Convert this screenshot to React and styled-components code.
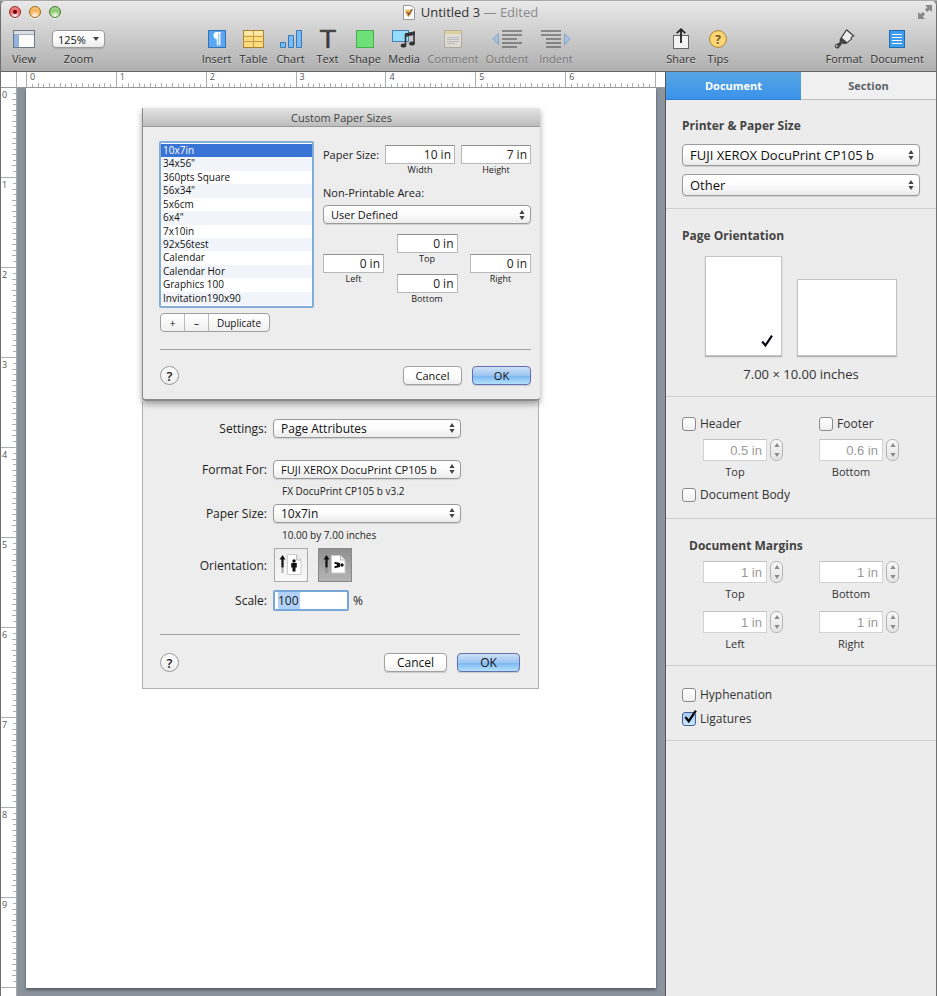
import React, { useState } from 'react';
import styled, { createGlobalStyle, css } from 'styled-components';

const GlobalStyle = createGlobalStyle`
  :root {
    --edge: #6f6f6f;
    --panel: #ececec;
    --ink: #333;
    --rule: #cfcfcf;
    --desk: #8b939d;
    --ui: 'Open Sans', 'Noto Sans', sans-serif;
  }

  * {
    box-sizing: border-box;
  }

  body {
    margin: 0;
    background: #8a8a8a;
    font-family: var(--ui);
    font-size: 12px;
    color: var(--ink);
  }

  button, input, select {
    font-family: inherit;
    margin: 0;
  }
`;

// --- Window ---
const Behind = styled.div`
  height: 1px;
  background: #a9a9a9;
`;

const Window = styled.div`
  display: flex;
  flex-direction: column;
  min-height: calc(100vh - 1px);
  border: solid var(--edge);
  border-width: 0 1px;
  border-radius: 5px 5px 0 0;
  overflow: hidden;
  background: var(--panel);
`;

const Chrome = styled.header`
  background: linear-gradient(#e9e9e9, #cfcfcf 45%, #b0b0b0);
  border-bottom: 1px solid #666;
`;

const TitleBar = styled.div`
  display: grid;
  grid-template-columns: 1fr auto 1fr;
  align-items: center;
  height: 22px;
  padding: 0 4px 0 8px;
`;

const Lights = styled.div`
  display: flex;
  gap: 8px;
`;

const Light = styled.button`
  width: 12px;
  height: 12px;
  padding: 0;
  border: 1px solid ${({ $edge }) => $edge};
  border-radius: 50%;
  background: radial-gradient(circle at 50% 90%, #fff 0, ${({ $color }) => $color} 60%);
  box-shadow: 0 1px 0 #f5f5f5, inset 0 2px 2px rgba(255, 255, 255, 0.4);
  display: grid;
  place-items: center;

  i {
    width: 4px;
    height: 4px;
    border-radius: 50%;
    background: #6d0508;
  }
`;

const Title = styled.h1`
  display: flex;
  align-items: center;
  gap: 6px;
  margin: 0;
  font-size: 13px;
  font-weight: 400;
  color: #333;

  em {
    font-style: normal;
    color: #8a8a8a;
  }
`;

const PlainButton = styled.button`
  justify-self: end;
  padding: 0;
  border: 0;
  background: none;
  line-height: 0;
`;

const Toolbar = styled.div`
  display: flex;
  height: 48px;
  padding: 4px 6px 0 5px;
`;

const Gap = styled.div`
  flex: ${({ $grow }) => $grow} 1 0;
`;

const itemBox = css`
  width: ${({ $w }) => $w}px;
  display: grid;
  grid-template-rows: 24px 16px;
  justify-items: center;
  align-items: center;
  align-content: start;
  padding: 0;
  border: 0;
  background: none;
  font-size: 11px;
  line-height: 16px;
  color: #333;
  text-shadow: 0 1px 0 rgba(255, 255, 255, 0.4);
`;

const ToolItem = styled.button`
  ${itemBox}
  opacity: ${({ disabled }) => (disabled ? 0.5 : 1)};

  svg {
    overflow: visible;
  }
`;

const ZoomItem = styled.label`
  ${itemBox}
  margin-left: 10px;
`;

// --- Selects: the arrow is stacked in the same grid cell ---
const SelectBox = styled.span`
  display: grid;
  align-items: center;
  width: 100%;

  > * {
    grid-area: 1 / 1;
  }

  svg {
    justify-self: end;
    margin-right: 6px;
    pointer-events: none;
  }
`;

const Select = styled.select`
  appearance: none;
  width: 100%;
  height: ${({ $h }) => $h}px;
  padding: 0 ${({ $pad }) => $pad || 7}px;
  border: 1px solid #9a9a9a;
  border-radius: 4px;
  background: linear-gradient(#fff, #fdfdfd 45%, #ebebeb);
  box-shadow: 0 1px 1px rgba(0, 0, 0, 0.12);
  font-size: ${({ $size }) => $size}px;
  color: #111;
`;

// --- Body of the window ---
const Body = styled.div`
  flex: 1;
  display: grid;
  grid-template-columns: 1fr 271px;
`;

const Main = styled.main`
  display: grid;
  grid-template-columns: 16px 1fr;
  grid-template-rows: 16px 1fr;
`;

const Corner = styled.div`
  background: #fff;
  border-right: 1px solid #aaa;
  border-bottom: 1px solid #999;
`;

const rulerText = css`
  background: #fff;
  font-size: 9px;
  line-height: 10px;
  color: #555;
`;

const RulerX = styled.div`
  ${rulerText}
  display: flex;
  padding: 0 9px;
  border-bottom: 1px solid #999;
`;

const InchX = styled.div`
  flex: 1;
  display: grid;
  border-left: 1px solid #aaafb6;

  &:last-child {
    border-right: 1px solid #aaafb6;
  }

  > * {
    grid-area: 1 / 1;
  }

  span {
    padding-left: 3px;
  }
`;

const RulerY = styled.div`
  ${rulerText}
  display: flex;
  flex-direction: column;
  padding-bottom: 8px;
  border-right: 1px solid #aaa;
`;

const InchY = styled.div`
  flex: 1 1 0;
  min-height: 0;
  display: grid;
  grid-template-rows: minmax(0, 1fr);
  border-bottom: 1px solid #aaafb6;

  > * {
    grid-area: 1 / 1;
  }

  span {
    padding: 2px 0 0 1px;
  }
`;

const Ticks = styled.svg`
  contain: size;
  width: 100%;
  height: 100%;
  stroke: #aaafb6;
  shape-rendering: crispEdges;
`;

const Canvas = styled.div`
  background: var(--desk);
  padding: 0 9px 8px;
`;

const Paper = styled.article`
  aspect-ratio: 7 / 10;
  padding: 20px 116px;
  background: #fff;
  box-shadow: 0 2px 3px rgba(0, 0, 0, 0.4);
`;

// --- Dialogs placed on the paper ---
const Sheet = styled.section`
  position: relative;
  z-index: 1;
  background: #ededed;
  border: solid #8a8a8a;
  border-width: 0 0 2px 1px;
  border-radius: 0 0 4px 4px;
  box-shadow: 0 3px 6px rgba(0, 0, 0, 0.35);
`;

const SheetTitle = styled.h2`
  margin: 0;
  height: 19px;
  border-bottom: 1px solid #999;
  background: linear-gradient(#e4e4e4, #bdbdbd);
  font-size: 11px;
  font-weight: 400;
  line-height: 19px;
  text-align: center;
  color: #444;
`;

const SheetBody = styled.div`
  display: flex;
  justify-content: space-between;
  gap: 8px;
  padding: 14px 9px 0 16px;
`;

const ListColumn = styled.div`
  width: 155px;
`;

const SizeList = styled.ul`
  display: grid;
  grid-auto-rows: minmax(0, 1fr);
  height: 167px;
  margin: 0 0 5px;
  padding: 1px 0;
  list-style: none;
  border: 2px solid #82add6;
  border-radius: 2px;
  background: #fff;
  font-size: 10px;
  line-height: 13px;
  color: #111;
`;

const SizeRow = styled.li`
  padding-left: 2px;
  background: ${({ $on }) => ($on ? '#3873d5' : 'transparent')};
  color: ${({ $on }) => ($on ? '#fff' : 'inherit')};

  &:nth-child(even) {
    background-color: #f1f5fa;
  }
`;

const Segments = styled.div`
  display: flex;
  width: 110px;
  height: 19px;
  margin-left: 1px;
  border: 1px solid #a0a0a0;
  border-radius: 4px;
  background: linear-gradient(#fff, #f0f0f0);

  button {
    padding: 0;
    width: 24px;
    border: 0;
    border-right: 1px solid #bbb;
    background: none;
    font-size: 10px;
    line-height: 16px;
    color: #111;
  }

  button:last-child {
    flex: 1;
    border-right: 0;
  }
`;

const Settings = styled.div`
  width: 208px;
  padding-top: 4px;
  font-size: 11px;
  line-height: 16px;
  color: #222;
`;

const SizeLine = styled.div`
  display: flex;
  justify-content: space-between;
  align-items: flex-start;
  height: 40px;

  > span {
    line-height: 20px;
  }
`;

const Field = styled.label`
  display: flex;
  flex-direction: column;
  align-items: center;
  width: ${({ $w }) => $w}px;
  font-size: 9px;
  line-height: 12px;
  color: #222;
`;

const Box = styled.input`
  width: 100%;
  height: 19px;
  padding: 0 3px;
  border: 1px solid #b8b8b8;
  border-top-color: #8f8f8f;
  background: #fff;
  font-size: 12px;
  text-align: right;
  color: #222;
`;

const AreaLabel = styled.label`
  display: block;
  margin-bottom: 4px;
`;

const Sides = styled.div`
  display: flex;
  justify-content: space-between;
  align-items: center;
  margin-top: 10px;
`;

const Stack = styled.div`
  display: grid;
  gap: 9px;
`;

const Actions = styled.footer`
  display: flex;
  align-items: center;
  gap: 10px;
  margin: ${({ $margin }) => $margin};
  padding-top: ${({ $top }) => $top}px;
  border-top: 1px solid #a3a3a3;
`;

const Help = styled.button`
  width: 19px;
  height: 19px;
  margin-right: auto;
  padding: 0;
  border: 1px solid #999;
  border-radius: 50%;
  background: linear-gradient(#fff, #eee);
  font-size: 13px;
  font-weight: 600;
  line-height: 16px;
  color: #222;
`;

const Push = styled.button`
  width: ${({ $w }) => $w}px;
  height: 19px;
  padding: 0;
  border: 1px solid ${({ $primary }) => ($primary ? '#6470b0' : '#a0a0a0')};
  border-radius: 4px;
  background: ${({ $primary }) =>
    $primary
      ? 'linear-gradient(#cfe0f7, #9cc5f2 50%, #78b6f1 52%, #b5e2fc)'
      : 'linear-gradient(#fff, #fff 50%, #efefef)'};
  box-shadow: 0 1px 1px rgba(0, 0, 0, 0.15);
  font-size: ${({ $size }) => $size || 11}px;
  line-height: 16px;
  color: #111;
`;

const PageSetup = styled.section`
  margin: 0 1px;
  padding-top: 17px;
  background: #ededed;
  border: 1px solid #b0b0b0;
  border-width: 0 1px 1px 0;
  box-shadow: -1px 0 0 #b0b0b0;
  font-size: 12px;
  color: #222;
`;

const SetupRow = styled.div`
  display: grid;
  grid-template-columns: 124px 188px auto;
  column-gap: 6px;
  align-items: center;
  height: ${({ $h }) => $h}px;
  margin-top: ${({ $apart }) => ($apart ? 21 : 0)}px;

  > label:first-child,
  > span:first-child {
    text-align: right;
  }
`;

const Note = styled.p`
  margin: 0;
  padding-left: 139px;
  font-size: 10px;
  line-height: 24px;
`;

const Orientations = styled.div`
  display: flex;
  gap: 10px;
  padding-left: 1px;
`;

const OrientButton = styled.button`
  display: grid;
  place-items: center;
  width: 34px;
  height: 34px;
  padding: 0;
  border: 1px solid ${({ $on }) => ($on ? '#888' : '#aaa')};
  background: ${({ $on }) => ($on ? 'linear-gradient(#8f8f8f, #b5b5b5)' : 'linear-gradient(#ececec, #f8f8f8)')};
`;

const ScaleLine = styled.div`
  display: flex;
  align-items: center;
  gap: 4px;
`;

const ScaleBox = styled.input`
  width: 76px;
  height: 21px;
  padding: 0 3px;
  border: 2px solid #76a7d8;
  border-radius: 2px;
  background: linear-gradient(90deg, transparent 3px, #b1d3fb 3px, #b1d3fb 25px, transparent 25px) #fff;
  font-size: 12px;
  color: #222;
`;

// --- Inspector ---
const Inspector = styled.aside`
  border-left: 1px solid #555;
  background: var(--panel);
`;

const Tabs = styled.div`
  display: grid;
  grid-template-columns: 1fr 1fr;
`;

const Tab = styled.button`
  height: 28px;
  padding: 0;
  border: 0;
  border-bottom: 1px solid ${({ $on }) => ($on ? '#2f7fd2' : '#bbb')};
  background: ${({ $on }) => ($on ? 'linear-gradient(#58a5e4, #3a93ea)' : '#f0f0f0')};
  font-size: 11px;
  font-weight: 700;
  color: ${({ $on }) => ($on ? '#fff' : '#5c6068')};
`;

const Section = styled.section`
  padding: ${({ $pad }) => $pad};
  border-bottom: 1px solid var(--rule);
`;

const Heading = styled.h3`
  margin: 0;
  padding-left: ${({ $inset }) => ($inset ? 7 : 0)}px;
  font-size: 12px;
  font-weight: 700;
  line-height: 20px;
  color: #444;
`;

const Pickers = styled.div`
  display: grid;
  gap: 8px;
  margin-top: 8px;
`;

const Pages = styled.div`
  display: flex;
  justify-content: center;
  align-items: flex-end;
  gap: 15px;
  margin: 10px 0 8px;
`;

const PageButton = styled.button`
  display: flex;
  justify-content: flex-end;
  align-items: flex-end;
  width: ${({ $w }) => $w}px;
  height: ${({ $h }) => $h}px;
  padding: 7px;
  border: 1px solid #c4c4c4;
  background: #fff;
  box-shadow: 0 1px 1px rgba(0, 0, 0, 0.25);
`;

const Measure = styled.p`
  margin: 0;
  font-size: 13px;
  line-height: 20px;
  text-align: center;
`;

const Pair = styled.div`
  display: grid;
  grid-template-columns: 130px 1fr;
`;

const HeaderPair = styled(Pair)`
  row-gap: 3px;
`;

const MarginPair = styled(Pair)`
  margin-top: 5px;
`;

const Check = styled.label`
  display: flex;
  align-items: center;
  gap: 5px;
  height: ${({ $h }) => $h || 20}px;
  padding-left: ${({ $inset }) => ($inset ? 7 : 0)}px;
`;

const TickCell = styled.span`
  display: grid;
  width: 13px;
  height: 13px;

  > * {
    grid-area: 1 / 1;
  }

  svg {
    margin: -3px 0 0 1px;
    pointer-events: none;
  }
`;

const Tick = styled.input`
  appearance: none;
  width: 14px;
  height: 14px;
  border: 1px solid #8a8a8a;
  border-radius: 3px;
  background: linear-gradient(#fff, #efefef);

  &:checked {
    border-color: #4a5f93;
    background: linear-gradient(#a9c9ee, #c9e9ff);
  }
`;

const Spin = styled.div`
  display: grid;
  grid-template-columns: 64px 13px;
  column-gap: 3px;
  justify-items: center;
  padding-left: ${({ $inset }) => ($inset ? 21 : 7)}px;
  height: ${({ $h }) => $h}px;
  align-content: start;

  label {
    font-size: 11px;
    line-height: 21px;
  }
`;

const SpinBox = styled.input`
  width: 100%;
  height: 22px;
  padding: 0 4px;
  border: 1px solid #d3d3d3;
  border-top-color: #c2c2c2;
  background: #fff;
  font-family: 'Liberation Sans', Arial, sans-serif;
  font-size: 13px;
  text-align: right;
  color: #999;
`;

const Stepper = styled.button`
  display: grid;
  place-items: center;
  width: 13px;
  height: 22px;
  padding: 0;
  border: 1px solid #b5b5b5;
  border-radius: 6px;
  background: linear-gradient(#f8f8f8, #e4e4e4);
`;

// --- Small drawings ---
const Arrows = () => (
  <svg width="6" height="10" viewBox="0 0 6 10" fill="#444">
    <path d="M3 0l2.600 4H.4zM3 10L.4 6h5.200z" />
  </svg>
);

const StepArrows = () => (
  <svg width="6" height="14" viewBox="0 0 6 14" fill="#8a8a8a">
    <path d="M3 0l2.600 4H.4zM3 14L.4 10h5.200z" />
  </svg>
);

const Checkmark = ({ size = 14 }) => (
  <svg width={size} height={size} viewBox="0 0 14 14" fill="none" stroke="#0a0a14" strokeWidth="2.2">
    <path d="M2.2 7.5L5.4 11.4 12 1.6" />
  </svg>
);

const ViewIcon = () => (
  <svg width="22" height="18" viewBox="0 0 22 18">
    <rect x=".5" y=".5" width="21" height="17" fill="#fbfbfb" stroke="#6d7785" />
    <path d="M1 1h20v3H1z" fill="#dcdfe2" />
    <path d="M1 5h4v12H1z" fill="#8fb4e3" />
    <path d="M1 4.500h20M5.500 5v12" stroke="#a3acb8" />
  </svg>
);

const InsertIcon = () => (
  <svg width="18" height="18" viewBox="0 0 18 18">
    <rect x=".5" y=".5" width="17" height="17" fill="#58a6f4" stroke="#3a70b0" />
    <text x="9" y="13" fontSize="16" fontWeight="700" textAnchor="middle" fill="#fff" fontFamily="Liberation Serif, serif">¶</text>
  </svg>
);

const TableIcon = () => (
  <svg width="21" height="18" viewBox="0 0 21 18">
    <rect x=".5" y=".5" width="20" height="17" fill="#fddd7b" stroke="#a8803a" />
    <path d="M1 1h19v4H1z" fill="#fbe9a5" />
    <path d="M0 6.500h21M0 11.500h21M10.500 1v16" stroke="#c39b50" />
  </svg>
);

const ChartIcon = () => (
  <svg width="22" height="18" viewBox="0 0 22 18" fill="#74bdf8" stroke="#3f78b5">
    <path d="M.5 12.500h5v5h-5zM8.500 5.500h5v12h-5zM16.500.5h5v17h-5z" />
  </svg>
);

const TextIcon = () => (
  <svg width="18" height="18" viewBox="0 0 18 18">
    <text x="9" y="18" fontSize="25" textAnchor="middle" fill="#333" stroke="#333" strokeWidth=".6" fontFamily="DejaVu Sans, sans-serif">T</text>
  </svg>
);

const ShapeIcon = () => (
  <svg width="18" height="18" viewBox="0 0 18 18">
    <rect x=".5" y=".5" width="17" height="17" fill="#6fe077" stroke="#4bab55" />
  </svg>
);

const MediaIcon = () => (
  <svg width="24" height="18" viewBox="0 0 24 18">
    <rect x=".5" y=".5" width="16" height="11" fill="#94dcf9" stroke="#4b80b5" />
    <path d="M13.500 15V4.500L22 2.500v11" fill="none" stroke="#333" strokeWidth="1.600" />
    <path d="M13 3.500l10-2.300v3.600L13 7.100z" fill="#333" />
    <ellipse cx="11.500" cy="15.500" rx="2.800" ry="2.100" fill="#333" />
    <ellipse cx="20" cy="13.500" rx="2.800" ry="2.100" fill="#333" />
  </svg>
);

const CommentIcon = () => (
  <svg width="18" height="18" viewBox="0 0 18 18">
    <rect x=".5" y=".5" width="17" height="17" fill="#f4f0e6" stroke="#a09274" />
    <path d="M1 1h16v3H1z" fill="#ecd568" />
    <path d="M3 7.500h12M3 9.500h12M3 11.500h12M3 13.500h8" stroke="#aaa" />
  </svg>
);

const DentIcon = ({ out }) => (
  <svg width="30" height="18" viewBox="0 0 30 18">
    <path d={out ? 'M6.500 3.500v11L.7 9z' : 'M23.500 3.500v11L29.300 9z'} fill="#7db8f0" stroke="#4d86c4" />
    <path
      d={out ? 'M10 1h20M10 5h20M10 9h15M10 13h20M10 17h15' : 'M0 1h20M0 5h20M5 9h15M5 13h15M5 17h15'}
      stroke="#444"
      strokeWidth="2"
    />
  </svg>
);

const ShareIcon = () => (
  <svg width="16" height="22" viewBox="0 0 16 22" fill="none">
    <rect x=".5" y="7.500" width="15" height="13" fill="#f3f3f3" stroke="#666" />
    <path d="M8 15V2M3.800 5.200L8 1.200l4.200 4" stroke="#222" strokeWidth="1.800" />
  </svg>
);

const TipsIcon = () => (
  <svg width="18" height="18" viewBox="0 0 18 18">
    <circle cx="9" cy="9" r="8.400" fill="#fbd672" stroke="#b08234" />
    <text x="9" y="13.500" fontSize="12" fontWeight="700" textAnchor="middle" fill="#7a4f14" fontFamily="Open Sans, sans-serif">?</text>
  </svg>
);

const FormatIcon = () => (
  <svg width="22" height="20" viewBox="0 0 22 20">
    <path d="M13.500 .8l7.200 6.200-2.500 1.300.3 1.800-5.500 4.400-5.400-4.700z" fill="#eee" stroke="#444" strokeWidth="1.200" />
    <path d="M8.600 8.400l5.600 4.900-2.300 1.900-2.200-.6c-1.600 1-2.600 3.700-4.500 4.800-1.800.6-4-.8-3.600-2.800.6-1.700 3.700-2 5.200-3.500l-.2-2.300z" fill="#444" />
    <circle cx="3.600" cy="17" r=".9" fill="#ddd" />
  </svg>
);

const DocumentIcon = () => (
  <svg width="16" height="18" viewBox="0 0 16 18">
    <rect x=".5" y=".5" width="15" height="17" fill="#3f9ded" stroke="#1c6cb8" />
    <path d="M3 4.500h10M3 7.500h10M3 10.500h10M3 13.500h10" stroke="#fff" />
  </svg>
);

const FileIcon = () => (
  <svg width="12" height="15" viewBox="0 0 12 15">
    <path d="M.5.5h8l3 3v11H.5z" fill="#fff" stroke="#999" />
    <path d="M2 4.500h7l-.5 4.500-3 3.500L2.800 9z" fill="#f0b868" />
    <path d="M3.500 7.500l2.500 1M5 10.500l4.500-6.500" stroke="#5a4030" strokeWidth="1.100" />
  </svg>
);

const FullscreenIcon = () => (
  <svg width="14" height="14" viewBox="0 0 14 14" fill="#888">
    <path d="M7 0h7v7l-2.300-2.300-2.400 2.400-2.400-2.400 2.400-2.400zM7 14H0V7l2.300 2.300 2.400-2.400 2.400 2.400-2.400 2.400z" />
  </svg>
);

const OrientIcon = ({ turned }) => (
  <svg width="24" height="22" viewBox="0 0 24 22">
    <path d="M3.500 1l3 4.500H4.600v8H2.400v-8H.5z" fill="#111" />
    <path d="M2.400 13.500h2.200V19H2.400z" fill="#777" opacity=".5" />
    <path d={turned ? 'M8.500 1.500h9l4.500 4.500v13h-13.500z' : 'M8.500.5h9l4.500 5v15h-13.500z'} fill="#fff" stroke="#ccc" />
    <path d="M17.500 1v5H22" fill="#e8e8e8" stroke="#bbb" />
    <g transform={turned ? 'rotate(90 15 11)' : undefined} fill="#111">
      <circle cx="15" cy="7" r="1.700" />
      <path d={turned ? 'M13 9h4l1.200 5.500h-2L15.600 12h-1.200l-.6 2.500h-2z' : 'M12.200 9h5.600v4.500h-1.300V17.500h-3V13.500h-1.300z'} />
    </g>
  </svg>
);

const steps = Array.from({ length: 15 }, (_, i) => i + 1);

const TicksX = () => (
  <Ticks>
    {steps.map((i) => (
      <line key={i} x1={`${i * 6.25}%`} x2={`${i * 6.25}%`} y1={i % 2 ? 12 : 11} y2="15" />
    ))}
  </Ticks>
);

const TicksY = () => (
  <Ticks>
    {steps.map((i) => (
      <line key={i} y1={`${i * 6.25}%`} y2={`${i * 6.25}%`} x1={i % 2 ? 12 : 11} x2="15" />
    ))}
  </Ticks>
);

const insertTools = [
  { name: 'Insert', w: 37, icon: <InsertIcon /> },
  { name: 'Table', w: 37, icon: <TableIcon /> },
  { name: 'Chart', w: 37, icon: <ChartIcon /> },
  { name: 'Text', w: 37, icon: <TextIcon /> },
  { name: 'Shape', w: 38, icon: <ShapeIcon /> },
  { name: 'Media', w: 40, icon: <MediaIcon /> },
  { name: 'Comment', w: 58, icon: <CommentIcon />, off: true },
  { name: 'Outdent', w: 50, icon: <DentIcon out />, off: true },
  { name: 'Indent', w: 48, icon: <DentIcon />, off: true },
];

const shareTools = [
  { name: 'Share', w: 38, icon: <ShareIcon /> },
  { name: 'Tips', w: 36, icon: <TipsIcon /> },
];

const panelTools = [
  { name: 'Format', w: 40, icon: <FormatIcon /> },
  { name: 'Document', w: 66, icon: <DocumentIcon /> },
];

const paperSizes = [
  '10x7in', '34x56"', '360pts Square', '56x34"', '5x6cm', '6x4"',
  '7x10in', '92x56test', 'Calendar', 'Calendar Hor', 'Graphics 100', 'Invitation190x90',
];

const renderTools = (tools) =>
  tools.map((tool) => (
    <ToolItem key={tool.name} $w={tool.w} disabled={tool.off}>
      {tool.icon}
      <span>{tool.name}</span>
    </ToolItem>
  ));

function Dropdown({ id, label, value, h = 19, size = 11 }) {
  return (
    <SelectBox>
      <Select id={id} aria-label={label} $h={h} $size={size}>
        <option>{value}</option>
      </Select>
      <Arrows />
    </SelectBox>
  );
}

function InField({ w, value, label }) {
  return (
    <Field $w={w}>
      <Box defaultValue={value} />
      {label}
    </Field>
  );
}

function SpinField({ id, value, label, inset, h }) {
  return (
    <Spin $inset={inset} $h={h}>
      <SpinBox id={id} defaultValue={value} />
      <Stepper aria-label={`Change ${id}`}>
        <StepArrows />
      </Stepper>
      <label htmlFor={id}>{label}</label>
    </Spin>
  );
}

function CheckField({ label, checked, onChange, h, inset }) {
  return (
    <Check $h={h} $inset={inset}>
      <TickCell>
        <Tick type="checkbox" checked={checked} onChange={onChange} />
        {checked && <Checkmark size={15} />}
      </TickCell>
      {label}
    </Check>
  );
}

function CustomSizes() {
  const [size, setSize] = useState('10x7in');

  return (
    <Sheet>
      <SheetTitle>Custom Paper Sizes</SheetTitle>
      <SheetBody>
        <ListColumn>
          <SizeList role="listbox" aria-label="Paper sizes">
            {paperSizes.map((name) => (
              <SizeRow
                key={name}
                role="option"
                aria-selected={name === size}
                $on={name === size}
                onClick={() => setSize(name)}
              >
                {name}
              </SizeRow>
            ))}
          </SizeList>
          <Segments>
            <button>+</button>
            <button>–</button>
            <button>Duplicate</button>
          </Segments>
        </ListColumn>
        <Settings>
          <SizeLine>
            <span>Paper Size:</span>
            <InField w={70} value="10 in" label="Width" />
            <InField w={70} value="7 in" label="Height" />
          </SizeLine>
          <AreaLabel htmlFor="area">Non-Printable Area:</AreaLabel>
          <Dropdown id="area" value="User Defined" />
          <Sides>
            <InField w={61} value="0 in" label="Left" />
            <Stack>
              <InField w={61} value="0 in" label="Top" />
              <InField w={61} value="0 in" label="Bottom" />
            </Stack>
            <InField w={61} value="0 in" label="Right" />
          </Sides>
        </Settings>
      </SheetBody>
      <Actions $margin="17px 9px 14px 17px" $top={16}>
        <Help aria-label="Help">?</Help>
        <Push $w={59}>Cancel</Push>
        <Push $w={59} $primary>OK</Push>
      </Actions>
    </Sheet>
  );
}

function PageSetupDialog() {
  return (
    <PageSetup>
      <SetupRow $h={20}>
        <label htmlFor="settings">Settings:</label>
        <Dropdown id="settings" value="Page Attributes" size={12} />
      </SetupRow>
      <SetupRow $h={20} $apart>
        <label htmlFor="format">Format For:</label>
        <Dropdown id="format" value="FUJI XEROX DocuPrint CP105 b" />
      </SetupRow>
      <Note>FX DocuPrint CP105 b v3.2</Note>
      <SetupRow $h={20}>
        <label htmlFor="paper">Paper Size:</label>
        <Dropdown id="paper" value="10x7in" size={12} />
      </SetupRow>
      <Note>10.00 by 7.00 inches</Note>
      <SetupRow $h={36}>
        <span>Orientation:</span>
        <Orientations>
          <OrientButton aria-label="Portrait">
            <OrientIcon />
          </OrientButton>
          <OrientButton aria-label="Landscape" $on>
            <OrientIcon turned />
          </OrientButton>
        </Orientations>
      </SetupRow>
      <SetupRow $h={34}>
        <label htmlFor="scale">Scale:</label>
        <ScaleLine>
          <ScaleBox id="scale" defaultValue="100" />%
        </ScaleLine>
      </SetupRow>
      <Actions $margin="17px 18px 16px 17px" $top={18}>
        <Help aria-label="Help">?</Help>
        <Push $w={63} $size={12}>Cancel</Push>
        <Push $w={63} $size={12} $primary>OK</Push>
      </Actions>
    </PageSetup>
  );
}

function DocumentPanel() {
  const [checks, setChecks] = useState({ ligatures: true });
  const bind = (key) => ({
    checked: Boolean(checks[key]),
    onChange: () => setChecks({ ...checks, [key]: !checks[key] }),
  });

  return (
    <Inspector>
      <Tabs>
        <Tab $on>Document</Tab>
        <Tab>Section</Tab>
      </Tabs>
      <Section $pad="16px 16px 12px">
        <Heading>Printer &amp; Paper Size</Heading>
        <Pickers>
          <Dropdown label="Printer" value="FUJI XEROX DocuPrint CP105 b" h={22} size={13} />
          <Dropdown label="Paper size" value="Other" h={22} size={13} />
        </Pickers>
      </Section>
      <Section $pad="17px 16px 12px">
        <Heading>Page Orientation</Heading>
        <Pages>
          <PageButton $w={77} $h={100} aria-label="Portrait page">
            <Checkmark />
          </PageButton>
          <PageButton $w={100} $h={77} aria-label="Landscape page" />
        </Pages>
        <Measure>7.00 × 10.00 inches</Measure>
      </Section>
      <Section $pad="14px 16px 14px">
        <HeaderPair>
          <CheckField label="Header" h={25} {...bind('header')} />
          <CheckField label="Footer" h={25} inset {...bind('footer')} />
          <SpinField id="header-top" value="0.5 in" label="Top" inset h={45} />
          <SpinField id="footer-bottom" value="0.6 in" label="Bottom" h={45} />
        </HeaderPair>
        <CheckField label="Document Body" {...bind('body')} />
      </Section>
      <Section $pad="17px 16px 4px">
        <Heading $inset>Document Margins</Heading>
        <MarginPair>
          <SpinField id="margin-top" value="1 in" label="Top" inset h={50} />
          <SpinField id="margin-bottom" value="1 in" label="Bottom" h={50} />
          <SpinField id="margin-left" value="1 in" label="Left" inset h={50} />
          <SpinField id="margin-right" value="1 in" label="Right" h={50} />
        </MarginPair>
      </Section>
      <Section $pad="16px 16px 10px">
        <CheckField label="Hyphenation" h={24} {...bind('hyphenation')} />
        <CheckField label="Ligatures" h={24} {...bind('ligatures')} />
      </Section>
    </Inspector>
  );
}

function App() {
  return (
    <>
      <GlobalStyle />
      <Behind />
      <Window>
        <Chrome>
          <TitleBar>
            <Lights>
              <Light aria-label="Close" $color="#e8474c" $edge="#8e2a2c"><i /></Light>
              <Light aria-label="Minimize" $color="#f3a93c" $edge="#a3671d" />
              <Light aria-label="Zoom window" $color="#7cc159" $edge="#48772f" />
            </Lights>
            <Title>
              <FileIcon />
              <span>Untitled 3 <em>— Edited</em></span>
            </Title>
            <PlainButton aria-label="Full screen">
              <FullscreenIcon />
            </PlainButton>
          </TitleBar>
          <Toolbar>
            <ToolItem $w={36}>
              <ViewIcon />
              <span>View</span>
            </ToolItem>
            <ZoomItem $w={53}>
              <SelectBox>
                <Select $h={18} $size={11} $pad={5} defaultValue="125%">
                  <option>125%</option>
                </Select>
                <svg width="6" height="4" viewBox="0 0 6 4" fill="#444"><path d="M0 0h6L3 4z" /></svg>
              </SelectBox>
              <span>Zoom</span>
            </ZoomItem>
            <Gap $grow={93} />
            {renderTools(insertTools)}
            <Gap $grow={82} />
            {renderTools(shareTools)}
            <Gap $grow={88} />
            {renderTools(panelTools)}
          </Toolbar>
        </Chrome>
        <Body>
          <Main>
            <Corner />
            <RulerX>
              {[0, 1, 2, 3, 4, 5, 6].map((n) => (
                <InchX key={n}>
                  <span>{n}</span>
                  <TicksX />
                </InchX>
              ))}
            </RulerX>
            <RulerY>
              {[0, 1, 2, 3, 4, 5, 6, 7, 8, 9].map((n) => (
                <InchY key={n}>
                  <span>{n}</span>
                  <TicksY />
                </InchY>
              ))}
            </RulerY>
            <Canvas>
              <Paper>
                <CustomSizes />
                <PageSetupDialog />
              </Paper>
            </Canvas>
          </Main>
          <DocumentPanel />
        </Body>
      </Window>
    </>
  );
}

export default App;
